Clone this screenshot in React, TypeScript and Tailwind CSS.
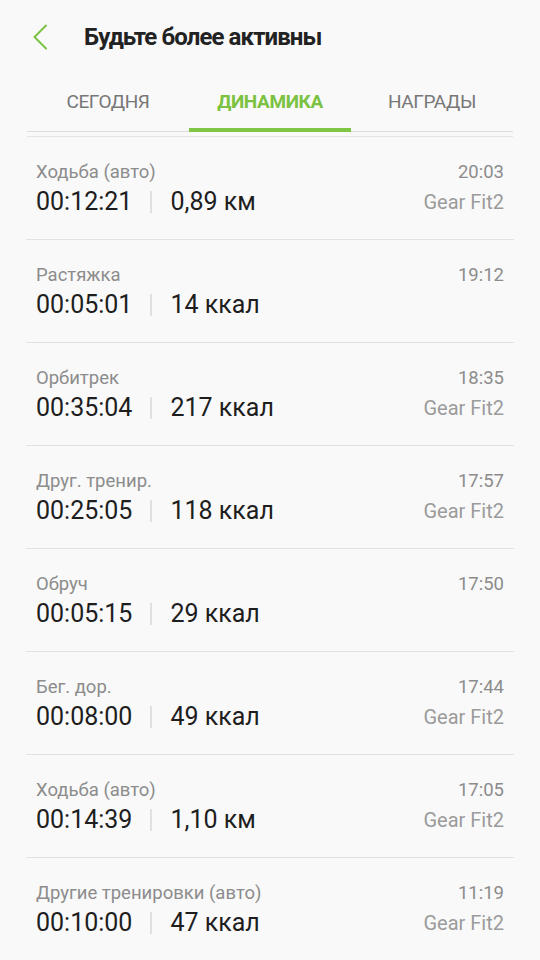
type Workout = {
  name: string;
  time: string;
  duration: string;
  value: string;
  device?: string;
};

const WORKOUTS: Workout[] = [
  { name: 'Ходьба (авто)', time: '20:03', duration: '00:12:21', value: '0,89 км', device: 'Gear Fit2' },
  { name: 'Растяжка', time: '19:12', duration: '00:05:01', value: '14 ккал' },
  { name: 'Орбитрек', time: '18:35', duration: '00:35:04', value: '217 ккал', device: 'Gear Fit2' },
  { name: 'Друг. тренир.', time: '17:57', duration: '00:25:05', value: '118 ккал', device: 'Gear Fit2' },
  { name: 'Обруч', time: '17:50', duration: '00:05:15', value: '29 ккал' },
  { name: 'Бег. дор.', time: '17:44', duration: '00:08:00', value: '49 ккал', device: 'Gear Fit2' },
  { name: 'Ходьба (авто)', time: '17:05', duration: '00:14:39', value: '1,10 км', device: 'Gear Fit2' },
  { name: 'Другие тренировки (авто)', time: '11:19', duration: '00:10:00', value: '47 ккал', device: 'Gear Fit2' },
];

const TABS = ['СЕГОДНЯ', 'ДИНАМИКА', 'НАГРАДЫ'];

export default function App() {
  return (
    <div className="w-[540px] h-[960px] overflow-hidden bg-[#f9f9f9] font-['Roboto',sans-serif]">

      {/* ── Header ─────────────────────────────── */}
      <div className="h-[74px] flex items-center">
        <svg width="16" height="26" viewBox="0 0 16 26" className="ml-[32px]" fill="none">
          <polyline points="14,1.5 2.5,13 14,24.5" stroke="#7cc242" strokeWidth="2" strokeLinecap="round" strokeLinejoin="round" />
        </svg>
        <h1 className="ml-[36px] text-[24px] font-bold tracking-[-0.9px] text-[#222]">
          Будьте более активны
        </h1>
      </div>

      {/* ── Tabs ───────────────────────────────── */}
      <div className="mx-[27px] h-[58px] flex border-b border-[#dcdcdc]">
        {TABS.map((tab, i) => (
          <div key={tab} className="relative flex-1 flex items-center justify-center">
            <span
              className={
                i === 1
                  ? 'text-[19px] font-bold tracking-[-0.4px] text-[#7cc242]'
                  : 'text-[19px] tracking-[-0.4px] text-[#777]'
              }
            >
              {tab}
            </span>
            {i === 1 && <div className="absolute left-0 right-0 -bottom-[1px] h-[4px] bg-[#80c645]" />}
          </div>
        ))}
      </div>
      <div className="mx-[27px] mt-[4px] border-t border-[#e4e4e4]" />

      {/* ── List ───────────────────────────────── */}
      <div className="mx-[26px]">
        {WORKOUTS.map((w, i) => (
          <div key={i} className="pt-[23px] pb-[22px] px-[10px] border-b border-[#e2e2e2] flex justify-between">
            <div>
              <div className="h-[24px] leading-[24px] text-[18.5px] text-[#8c8c8c]">{w.name}</div>
              <div className="mt-[3px] h-[30px] flex items-center text-[25px] text-[#1e1e1e]">
                <span>{w.duration}</span>
                <span className="mx-[18px] w-[2px] h-[22px] bg-[#e0e0e0]" />
                <span>{w.value}</span>
              </div>
            </div>
            <div className="flex flex-col items-end">
              <div className="h-[24px] leading-[24px] text-[18.5px] text-[#8c8c8c]">{w.time}</div>
              {w.device && (
                <div className="mt-[3px] h-[30px] leading-[30px] text-[20px] text-[#9b9b9b]">{w.device}</div>
              )}
            </div>
          </div>
        ))}
      </div>

    </div>
  );
}
